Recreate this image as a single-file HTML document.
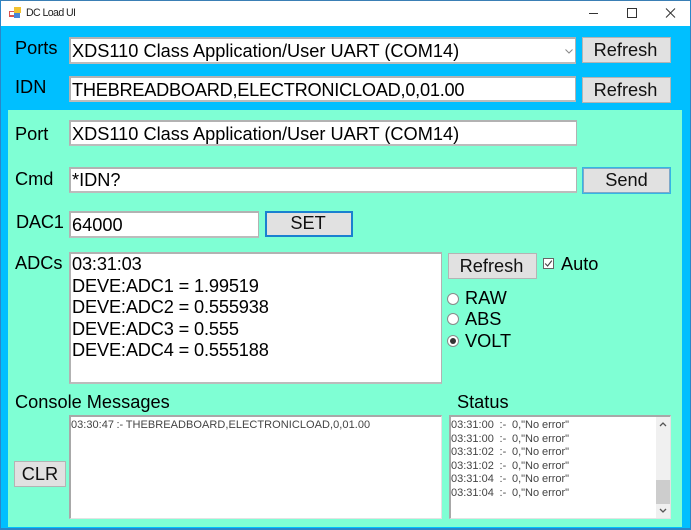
<!DOCTYPE html>
<html><head><meta charset="utf-8"><style>
html,body{margin:0;padding:0;background:#fff}
#w{position:relative;width:691px;height:530px;overflow:hidden;background:#fff;font-family:"Liberation Sans",sans-serif;color:#000;filter:blur(.3px)}
#w div{position:absolute;box-sizing:border-box;white-space:nowrap}
.t{font-size:18.2px;line-height:22px}
.box{background:#fff;border:2px solid #b2b2b2;border-right-width:1px;border-bottom-color:#bcbcbc;font-size:18.2px;line-height:22px;padding-left:1px;padding-top:1px}
.btn{background:#e1e1e1;border:1px solid #b4b4b4;font-size:18.2px;line-height:22px;text-align:center;padding-top:1px;padding-right:2px;color:#111}
.blue{border:2px solid #1a80d0}
.sm{font-size:11px;line-height:13.6px;color:#444}
.rad{width:12px;height:12px;border:1px solid #8a8a8a;border-radius:50%;background:#fff}
</style></head><body><div id="w">
<div style="left:0;top:0;width:691px;height:530px;background:#00bfff"></div>
<div style="left:0;top:0;width:691px;height:26px;background:#fff;border:1px solid #3a7fb5;border-bottom:0"></div>
<div style="left:0;top:0;width:1px;height:530px;background:#2a86c8"></div>
<div style="left:690px;top:0;width:1px;height:530px;background:#2a86c8"></div>
<div style="left:0;top:528px;width:691px;height:2px;background:#2a86c8"></div>
<svg style="position:absolute;left:9px;top:7px" width="12" height="12" viewBox="0 0 12 12"><rect x="0" y="4" width="6" height="6" fill="#d9534f"/><rect x="5" y="0" width="7" height="6" fill="#f2c230"/><rect x="5" y="6" width="6" height="5" fill="#4a86d8"/><rect x="1" y="5" width="4" height="3" fill="#fff"/></svg>
<div style="left:26px;top:6px;font-size:10.6px;letter-spacing:-.6px;line-height:14px;color:#222">DC Load UI</div>
<svg style="position:absolute;left:580px;top:0" width="111" height="26" viewBox="0 0 111 26" fill="none" stroke="#333" stroke-width="1"><path d="M9 13.5H18"/><rect x="47.5" y="8.5" width="9" height="9"/><path d="M86 8.5L95 17.5M95 8.5L86 17.5"/></svg>

<div style="left:8px;top:110px;width:674px;height:417px;background:#7fffd4"></div>

<div class="t" style="left:15px;top:37px">Ports</div>
<div class="box" style="left:69px;top:37px;width:507px;height:27px">XDS110 Class Application/User UART (COM14)</div>
<svg style="position:absolute;left:564px;top:48px" width="11" height="7" viewBox="0 0 11 7" fill="none" stroke="#888" stroke-width="1"><path d="M1.5 1.5L5 5L8.5 1.5"/></svg>
<div class="btn" style="left:582px;top:37px;width:89px;height:26px">Refresh</div>

<div class="t" style="left:15px;top:76px">IDN</div>
<div class="box" style="left:69px;top:76px;width:507px;height:26px;letter-spacing:-.25px">THEBREADBOARD,ELECTRONICLOAD,0,01.00</div>
<div class="btn" style="left:582px;top:77px;width:89px;height:26px">Refresh</div>

<div class="t" style="left:15px;top:123px">Port</div>
<div class="box" style="left:69px;top:120px;width:508px;height:26px">XDS110 Class Application/User UART (COM14)</div>

<div class="t" style="left:15px;top:168px">Cmd</div>
<div class="box" style="left:69px;top:167px;width:508px;height:26px;padding-top:0">*IDN?</div>
<div class="btn" style="left:582px;top:167px;width:89px;height:27px;border:1px solid #35b5e5;box-shadow:inset 0 0 0 1px #7fa8c8;padding-top:1px;padding-right:0">Send</div>

<div class="t" style="left:16px;top:211px;letter-spacing:-.2px">DAC1</div>
<div class="box" style="left:69px;top:211px;width:190px;height:27px">64000</div>
<div class="btn blue" style="left:265px;top:211px;width:88px;height:26px;padding-top:0;line-height:20px">SET</div>

<div class="t" style="left:15px;top:252px">ADCs</div>
<div class="box" style="left:69px;top:252px;width:373px;height:132px;line-height:21.5px;padding-top:0;letter-spacing:-.15px">03:31:03<br>DEVE:ADC1 = 1.99519<br>DEVE:ADC2 = 0.555938<br>DEVE:ADC3 = 0.555<br>DEVE:ADC4 = 0.555188</div>
<div class="btn" style="left:448px;top:253px;width:89px;height:26px">Refresh</div>
<div style="left:543px;top:258px;width:11px;height:11px;background:#fff;border:1px solid #666"></div>
<svg style="position:absolute;left:544px;top:259px" width="9" height="9" viewBox="0 0 9 9" fill="none" stroke="#444" stroke-width="1.1"><path d="M1.2 4.5L3.6 7L7.8 1.6"/></svg>
<div class="t" style="left:561px;top:253px">Auto</div>

<div class="rad" style="left:447px;top:293px"></div>
<div class="t" style="left:465px;top:287px">RAW</div>
<div class="rad" style="left:447px;top:313px"></div>
<div class="t" style="left:465px;top:308px">ABS</div>
<div class="rad" style="left:447px;top:335px"></div>
<div style="left:450px;top:338px;width:6px;height:6px;border-radius:50%;background:#333"></div>
<div class="t" style="left:465px;top:330px">VOLT</div>

<div class="t" style="left:15px;top:391px">Console Messages</div>
<div class="t" style="left:457px;top:391px">Status</div>
<div class="btn" style="left:14px;top:461px;width:52px;height:26px;padding-top:1px;padding-right:0">CLR</div>

<div style="left:69px;top:415px;width:373px;height:104px;background:#fff;border:1px solid #e3e3e3;border-left:2px solid #a8a8a8;border-top:2px solid #a8a8a8"></div>
<div class="sm" style="left:71px;top:419px;word-spacing:-.6px;letter-spacing:.02px">03:30:47 :- <span style="letter-spacing:.05px">THEBREADBOARD,ELECTRONICLOAD,0,01.00</span></div>

<div style="left:449px;top:415px;width:222px;height:104px;background:#fff;border:1px solid #e3e3e3;border-left:2px solid #a8a8a8;border-top:2px solid #a8a8a8"></div>
<div class="sm" style="left:451px;top:419px;white-space:pre;word-spacing:-.2px">03:31:00  :-  0,"No error"
03:31:00  :-  0,"No error"
03:31:02  :-  0,"No error"
03:31:02  :-  0,"No error"
03:31:04  :-  0,"No error"
03:31:04  :-  0,"No error"</div>
<div style="left:656px;top:417px;width:14px;height:101px;background:#f0f0f0"></div>
<div style="left:656px;top:480px;width:14px;height:24px;background:#cdcdcd"></div>
<svg style="position:absolute;left:656px;top:417px" width="14" height="101" viewBox="0 0 14 101" fill="none" stroke="#555" stroke-width="1.3"><path d="M4 9L7 6L10 9"/><path d="M4 92L7 95L10 92"/></svg>
</div></body></html>
